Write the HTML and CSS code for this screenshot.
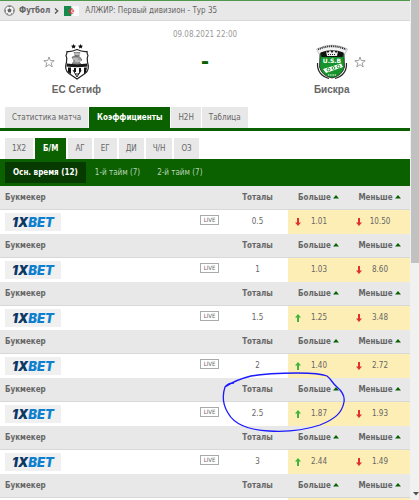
FILE: index.html
```html
<!DOCTYPE html>
<html lang="ru">

<head>
    <meta charset="UTF-8">
    <meta name="viewport" content="width=device-width, initial-scale=1.0">
    <title>ЕС Сетиф - Бискра</title>
    <link rel="stylesheet" href="styles.css">
    <script defer src="odds.js"></script>
</head>

<body>
    <svg class="sprite" aria-hidden="true">
        <symbol id="star" viewBox="0 0 12 12">
            <path d="M6 1 L7.3 4.5 L11.2 4.7 L8.2 7 L9.2 10.8 L6 8.6 L2.8 10.8 L3.8 7 L0.8 4.7 L4.7 4.5 Z" fill="#fff" stroke="#888" stroke-width=".8"/>
        </symbol>
        <symbol id="arrow" viewBox="0 0 6 8">
            <path d="M3 0 L6 3.6 H4 V8 H2 V3.6 H0 Z" fill="currentColor"/>
        </symbol>
        <symbol id="sort" viewBox="0 0 6 4">
            <path d="M3 0 L6 3.5 H0 Z" fill="#0b6100"/>
        </symbol>
    </svg>

    <main class="page">
        <nav class="breadcrumb">
            <svg class="ball" viewBox="0 0 12 12" aria-hidden="true">
                <circle cx="6" cy="6" r="5.2" fill="#f4f4f4" stroke="#666" stroke-width="1"/>
                <path d="M6 3.6 L8.3 5.3 L7.4 8 H4.6 L3.7 5.3 Z M4.2 1.2 H7.8 L6 2.5 Z M1 5 L2.3 6.2 L1.6 8.2 Z M11 5 L9.7 6.2 L10.4 8.2 Z M4 10.5 L4.4 9.2 L3 8.8 Z M8 10.5 L7.6 9.2 L9 8.8 Z" fill="#666"/>
            </svg>
            <a href="#" class="sport">Футбол</a>
            <svg class="chevron" viewBox="0 0 5 6" aria-hidden="true"><path d="M1 .5 L3.7 3 L1 5.5" fill="none" stroke="#555" stroke-width="1.3"/></svg>
            <svg class="flag" viewBox="0 0 15 10" aria-hidden="true">
                <path d="M0 0 H7.5 V10 H0 Z" fill="#168a4c"/>
                <path d="M7.5 0 H15 V10 H7.5 Z" fill="#fafafa"/>
                <path d="M9.3 3.4 A2.5 2.5 0 1 0 9.3 6.9 A2 2 0 1 1 9.3 3.4 Z M7.8 5 L10 4.2 L9.3 5.1 L10 6 Z" fill="#e0303c" stroke="#e0303c" stroke-width=".4"/>
            </svg>
            <a href="#">АЛЖИР: Первый дивизион - Тур 35</a>
        </nav>

        <section class="match">
            <div class="team home">
                <div class="crest-row">
                    <button class="fav" aria-label="В избранное"><svg viewBox="0 0 12 12"><use href="#star"/></svg></button>
                    <svg class="crest" viewBox="0 0 36 38" aria-hidden="true">
                        <path d="M14.5 1 l.8 1.5 1.7.2-1.2 1.2.3 1.6-1.6-.8-1.5.8.3-1.6L12 2.7l1.7-.2Z M21.5 1 l.8 1.5 1.7.2-1.2 1.2.3 1.6-1.6-.8-1.5.8.3-1.6L19 2.7l1.7-.2Z" fill="#111"/>
                        <path d="M8 8.500 Q13 9 18 6.500 Q23 9 28 8.500 Q28 11 29 12.500 Q27.500 15 28.500 19 Q31 27 26 30.500 L18 36 L10 30.500 Q5 27 7.500 19 Q8.500 15 7 12.500 Q8 11 8 8.500 Z" fill="#fff" stroke="#222" stroke-width="1.200"/>
                        <path d="M15 9.500 H21 L20 13 H16 Z M13 14 Q17 12 21 14 L23 17 L20 19 L22 21 H13 L15 18 Z" fill="#999" stroke="#444" stroke-width=".5"/>
                        <path d="M15 11 H21 M14 16 H19 M16 18 H22" stroke="#eee" stroke-width=".8"/>
                        <path d="M8 20.500 Q18 22 28 20.500 L28.500 23.500 Q18 25 7.500 23.500 Z" fill="#1a1a1a"/>
                        <path d="M9 24.500 H12 V31 L9 29 Z M15 25 H17 V29 H15 Z M20 25 H22 V29 H20 Z M25 24.500 H28 L27 29 L25 31 Z" fill="#111"/>
                        <path d="M14 27 L18 34 L22 27 L20 31 H16" fill="none" stroke="#222" stroke-width="1"/>
                    </svg>
                </div>
                <a href="#" class="team-name">ЕС Сетиф</a>
            </div>
            <div class="center">
                <time class="kickoff" datetime="2021-08-09T22:00">09.08.2021 22:00</time>
                <span class="score">-</span>
            </div>
            <div class="team away">
                <div class="crest-row">
                    <svg class="crest" viewBox="0 0 36 38" aria-hidden="true">
                        <path d="M2.500 6 Q18 -2 33.500 6 L31 11 Q18 6 5 11 Z" fill="#f3f3f3" stroke="#999" stroke-width=".5"/>
                        <path d="M4 6.500 Q18 0 32 6.500" fill="none" stroke="#333" stroke-width="1.800" stroke-dasharray="1.200 .7"/>
                        <path d="M6 11 Q18 6 30 11 L30.500 24 Q28 33 18 35 Q8 33 5.500 24 Z" fill="#16942b" stroke="#222" stroke-width=".8"/>
                        <path d="M6.500 9.500 Q18 5 29.500 9.500 L28.500 14 H7.500 Z" fill="#111"/>
                        <path d="M12 8 L14 10 L16 7.500 L18 10 L20 7.500 L22 10 L24 8 L23 13 H13 Z" fill="#eee"/>
                        <path d="M14 11.500 H22" stroke="#222" stroke-width="1" stroke-dasharray="1 1"/>
                        <text x="18" y="20" class="crest-text">U.S.B</text>
                        <path d="M9 26 L27 20.500 L29 24 L12 30 Z" fill="#fff"/>
                        <g fill="none" stroke="#16942b" stroke-width="1"><circle cx="14.500" cy="26.500" r="1.400"/><circle cx="19.500" cy="25" r="1.400"/><circle cx="24.500" cy="23.500" r="1.400"/></g>
                        <path d="M3.500 20 Q3 32 15 35.500 M32.500 20 Q33 32 21 35.500" fill="none" stroke="#222" stroke-width="1.200"/>
                        <path d="M14 32 H22" stroke="#fff" stroke-width="1" stroke-dasharray="1.200 .5"/>
                    </svg>
                    <button class="fav" aria-label="В избранное"><svg viewBox="0 0 12 12"><use href="#star"/></svg></button>
                </div>
                <a href="#" class="team-name">Бискра</a>
            </div>
        </section>

        <nav class="tabs">
            <a href="#">Статистика матча</a>
            <a href="#" class="active">Коэффициенты</a>
            <a href="#">H2H</a>
            <a href="#">Таблица</a>
        </nav>

        <nav class="tabs markets">
            <a href="#">1X2</a>
            <a href="#" class="active">Б/М</a>
            <a href="#">АГ</a>
            <a href="#">ЕГ</a>
            <a href="#">ДИ</a>
            <a href="#">Ч/Н</a>
            <a href="#">ОЗ</a>
        </nav>

        <nav class="periods">
            <a href="#" class="active">Осн. время (12)</a>
            <a href="#">1-й тайм (7)</a>
            <a href="#">2-й тайм (7)</a>
        </nav>

        <div class="odds" id="odds"></div>
    </main>

    <div class="scrollbar" aria-hidden="true">
        <div class="thumb"></div>
        <svg class="scroll-down" viewBox="0 0 6 4"><path d="M0 0 H6 L3 3.500 Z" fill="#505050"/></svg>
    </div>

    <svg class="marker" viewBox="0 0 126 64" aria-hidden="true">
        <path d="M3 17 C10 12 17 9 29 6 C46 3 60 3 76 3 C90 3 100 4 105 6 C110 10 110 13 115 17 C121 22 123 26 122 32 C120 43 113 49 98 55 C83 60 64 62 47 61 C27 60 12 54 6 43 C1 35 0 26 3 17 Q6 13 12 13" fill="none" stroke="#1a1aff" stroke-width="1.300" stroke-linejoin="round"/>
    </svg>
</body>

</html>
```
FILE: styles.css
```css
* {
    box-sizing: border-box;
}

body {
    margin: 0;
    height: 100vh;
    overflow: hidden;
    display: flex;
    background: #fff;
    color: #666;
    font-family: "DejaVu Sans Condensed", "DejaVu Sans", sans-serif;
    font-size: 8px;
}

a {
    color: inherit;
    text-decoration: none;
}

.sprite {
    display: none;
}

.page {
    flex: 1;
    min-width: 0;
}

/* breadcrumb */
.breadcrumb {
    display: flex;
    align-items: center;
    height: 21px;
    padding-left: 4px;
    border-top: 1px solid #4f9a4a;
    border-bottom: 1px solid #d8d8d8;
    background: #e8e8e8;
}

.ball {
    width: 11px;
    height: 11px;
    margin-right: 4px;
}

.sport {
    font-weight: bold;
}

.chevron {
    width: 5px;
    height: 6px;
    margin: 0 5px 0 4px;
}

.flag {
    width: 15px;
    height: 10px;
    margin-right: 6px;
}

/* match header */
.match {
    display: grid;
    grid-template-columns: 1fr 1fr 1fr;
    height: 86px;
    padding-top: 8px;
}

.team {
    display: flex;
    flex-direction: column;
    align-items: center;
    padding-top: 14px;
}

.home {
    padding-left: 16px;
}

.away {
    padding-right: 20px;
}

.crest-row {
    display: flex;
    align-items: center;
    gap: 4px;
}

.home .crest-row {
    margin-left: -14px;
}

.away .crest-row {
    margin-right: -16px;
}

.crest {
    width: 36px;
    height: 38px;
}

.crest-text {
    font: bold 6px "DejaVu Sans", sans-serif;
    fill: #fff;
    text-anchor: middle;
}

.fav {
    width: 12px;
    height: 12px;
    padding: 0;
    border: none;
    background: none;
    cursor: pointer;
}

.fav svg {
    display: block;
    width: 12px;
    height: 12px;
}

.team-name {
    font: bold 10px/18px "Liberation Sans", sans-serif;
}

.center {
    display: flex;
    flex-direction: column;
    align-items: center;
}

.kickoff {
    line-height: 12px;
    color: #999;
}

.score {
    color: #0b6100;
    font: bold 24px/40px "Liberation Sans", sans-serif;
}

/* tabs */
.tabs {
    display: flex;
    gap: 1px;
    padding-left: 5px;
    border-bottom: 3px solid #0b6100;
}

.tabs a {
    height: 21px;
    padding: 0 7px;
    background: #e8e8e8;
    line-height: 21px;
}

.tabs .active {
    padding: 0 8px;
    background: #0b6100;
    color: #fff;
    font-weight: bold;
}

.markets {
    gap: 2px;
    margin-top: 7px;
    border-bottom: none;
}

.periods {
    display: flex;
    gap: 1px;
    height: 27px;
    padding: 3px 5px;
    background: #0b6100;
    color: #b9d3b6;
}

.periods a {
    padding: 0 8px;
    line-height: 21px;
}

.periods .active {
    background: #063a00;
    color: #fff;
    font-weight: bold;
}

/* odds tables */
.odds table {
    width: 100%;
    table-layout: fixed;
    border-collapse: collapse;
}

.odds th,
.odds td {
    padding: 0;
    text-align: center;
}

.odds th {
    height: 23px;
    background: #e8e8e8;
    border-bottom: 1px solid #d8d8d8;
}

.odds td {
    height: 25px;
}

.odds .bookmaker {
    padding-left: 5px;
    text-align: left;
}

.odds .live-col {
    width: 36px;
}

.odds .num-col {
    width: 61px;
}

.odds td.odd {
    background: #fdeeb5;
}

.brand {
    display: flex;
    align-items: center;
    justify-content: center;
    width: 56px;
    height: 18px;
    background: #f0f0f0;
    color: #0f80d0;
    font: italic 900 13px/18px Inter, "Liberation Sans", sans-serif;
}

.brand b {
    color: #0b3766;
    font-weight: 900;
}

.odds .live-cell {
    padding-top: 5px;
    vertical-align: top;
}

.live {
    display: block;
    width: 19px;
    margin-left: 9px;
    border: 1px solid #aaa;
    line-height: 8px;
    font-size: 6px;
}

.sort {
    width: 6px;
    height: 4px;
    margin-left: 2px;
    vertical-align: middle;
}

.odd-value {
    display: grid;
    grid-template-columns: 6px 1fr;
    align-items: center;
    padding: 0 12px 0 7px;
}

.odd-value span {
    grid-column: 2;
}

.trend {
    width: 6px;
    height: 8px;
}

.up {
    color: #3fb53f;
}

.down {
    color: #e03030;
    transform: rotate(180deg);
}

/* scrollbar */
.scrollbar {
    display: flex;
    flex-direction: column;
    justify-content: space-between;
    width: 9px;
    padding: 0 0 4px 1px;
    background: #f1f1f1;
}

.thumb {
    height: 53%;
    background: #c1c1c1;
}

.scroll-down {
    width: 6px;
    height: 4px;
    margin-left: 2px;
}

/* pen mark over the table */
.marker {
    position: absolute;
    left: 222px;
    top: 370px;
    width: 126px;
    height: 64px;
    pointer-events: none;
}
```
FILE: odds.js
```js
const rows = [
    { total: '0.5', over: ['down', '1.01'], under: ['down', '10.50'] },
    { total: '1', over: ['', '1.03'], under: ['down', '8.60'] },
    { total: '1.5', over: ['up', '1.25'], under: ['down', '3.48'] },
    { total: '2', over: ['up', '1.40'], under: ['down', '2.72'] },
    { total: '2.5', over: ['up', '1.87'], under: ['down', '1.93'] },
    { total: '3', over: ['up', '2.44'], under: ['down', '1.49'] },
    { total: '', over: ['', ''], under: ['', ''] }
];

const sortIcon = '<svg class="sort" aria-hidden="true"><use href="#sort"/></svg>';

function oddCell([trend, value]) {
    const icon = trend ? `<svg class="trend ${trend}" aria-hidden="true"><use href="#arrow"/></svg>` : '';
    return `<td class="odd"><div class="odd-value">${icon}<span>${value}</span></div></td>`;
}

document.getElementById('odds').innerHTML = rows.map(row => `
    <table>
        <thead>
            <tr>
                <th class="bookmaker">Букмекер</th>
                <th class="live-col"></th>
                <th class="num-col">Тоталы</th>
                <th class="num-col">Больше${sortIcon}</th>
                <th class="num-col">Меньше${sortIcon}</th>
            </tr>
        </thead>
        <tbody>
            <tr>
                <td class="bookmaker"><a href="#" class="brand">${row.total ? '<b>1X</b>BET' : ''}</a></td>
                <td class="live-cell">${row.total ? '<span class="live">LIVE</span>' : ''}</td>
                <td>${row.total}</td>
                ${oddCell(row.over)}
                ${oddCell(row.under)}
            </tr>
        </tbody>
    </table>`).join('');
```
